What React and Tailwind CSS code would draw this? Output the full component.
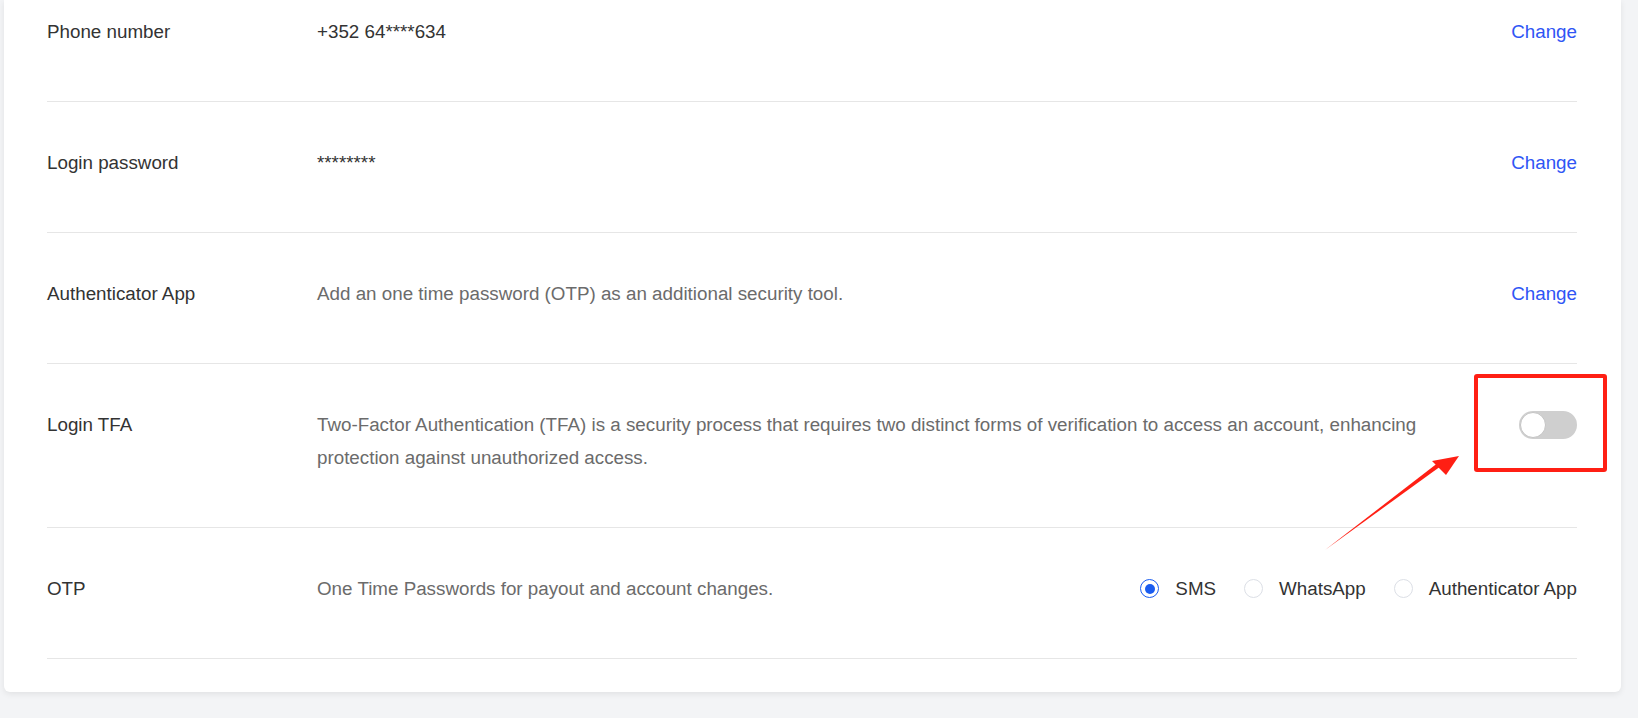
import React from "react";

const FONT = { fontFamily: '"Liberation Sans", Arial, sans-serif' };

const rows = [
  { label: "Phone number", value: "+352 64****634", kind: "value", action: "change", first: true },
  { label: "Login password", value: "********", kind: "value", action: "change" },
  {
    label: "Authenticator App",
    value: "Add an one time password (OTP) as an additional security tool.",
    kind: "desc",
    action: "change",
  },
  {
    label: "Login TFA",
    value:
      "Two-Factor Authentication (TFA) is a security process that requires two distinct forms of verification to access an account, enhancing protection against unauthorized access.",
    kind: "desc",
    action: "toggle",
  },
  {
    label: "OTP",
    value: "One Time Passwords for payout and account changes.",
    kind: "desc",
    action: "radios",
  },
];

const Toggle = () => (
  <div className="mt-[3px] w-[58px] h-[28px] rounded-full bg-[#cfcfcf] p-[1px] flex items-center">
    <div className="w-[26px] h-[26px] rounded-full bg-white border border-[#c4c4c4]" />
  </div>
);

const Radio = ({ checked, label }) => (
  <label className="flex items-center gap-[16px]">
    {checked ? (
      <span className="w-[19px] h-[19px] rounded-full border border-[#1a5cf0] flex items-center justify-center">
        <span className="w-[10px] h-[10px] rounded-full bg-[#1a5cf0]" />
      </span>
    ) : (
      <span className="w-[19px] h-[19px] rounded-full border border-[#dcdfe6] bg-white" />
    )}
    <span className="text-[#333]">{label}</span>
  </label>
);

export default function App() {
  return (
    <div className="relative min-h-[718px] bg-[#f3f4f6] text-[18.8px] leading-[33px] overflow-hidden" style={FONT}>
      <div className="ml-[4px] w-[1617px] bg-white rounded-b-[6px] shadow-[0_2px_6px_rgba(0,0,0,0.08)] pl-[43px] pr-[44px] pb-[33px]">
        {rows.map((row) => (
          <div
            key={row.label}
            className={`flex items-start border-b border-[#e6e6e6] pb-[53px] ${row.first ? "pt-[15px]" : "pt-[44px]"}`}
          >
            <div className="w-[270px] shrink-0 text-[#333]">{row.label}</div>
            <div
              className={`flex-1 min-w-0 ${row.kind === "value" ? "text-[#333]" : "text-[#6b6b6b]"} ${
                row.action === "toggle" ? "pr-[60px]" : "pr-[24px]"
              }`}
            >
              {row.value}
            </div>
            {row.action === "change" && (
              <a className="shrink-0 text-[#2f55f5] cursor-pointer">Change</a>
            )}
            {row.action === "toggle" && (
              <div className="shrink-0">
                <Toggle />
              </div>
            )}
            {row.action === "radios" && (
              <div className="shrink-0 flex items-center gap-[28px]">
                <Radio checked label="SMS" />
                <Radio label="WhatsApp" />
                <Radio label="Authenticator App" />
              </div>
            )}
          </div>
        ))}
      </div>

      {/* annotation: red box around the TFA toggle */}
      <div className="pointer-events-none absolute left-[1474px] top-[374px] w-[133px] h-[98px] border-4 border-[#ff1f14] rounded-[3px]" />

      {/* annotation: arrow pointing at the box */}
      <svg
        className="pointer-events-none absolute left-0 top-0"
        width="1638"
        height="718"
        viewBox="0 0 1638 718"
      >
        <polygon points="1325,550 1441,466 1439,462" fill="#ff1f14" />
        <polygon points="1459,456 1432,461 1446,475" fill="#ff1f14" />
      </svg>
    </div>
  );
}
